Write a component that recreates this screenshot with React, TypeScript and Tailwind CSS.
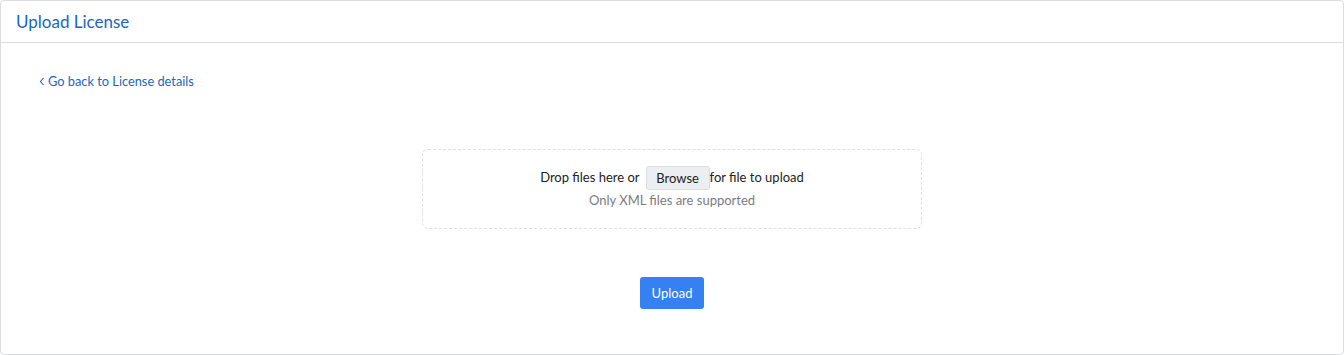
import React from 'react';

export default function App() {
  return (
    <div className="h-[355px] w-full bg-white" style={{ fontFamily: 'Lato, "Noto Sans", sans-serif' }}>
      <div className="h-[355px] rounded-[4px] border border-[#dcdde1] bg-white flex flex-col">
        <div className="h-[42px] border-b border-[#dcdde1] px-[15px] flex items-center">
          <h1 className="text-[17px] text-[#1b66c0] leading-none">Upload License</h1>
        </div>
        <div className="flex-1 px-[38px] pt-[32px]">
          <a href="#" className="flex items-center gap-[3px] text-[12.8px] text-[#1b66c0] leading-none">
            <svg width="6" height="9" viewBox="0 0 6 9" fill="none">
              <path d="M4.5 1 1.5 4.5 4.5 8" stroke="#1b66c0" strokeWidth="1.1" />
            </svg>
            Go back to License details
          </a>
          <div className="mt-[61px] flex justify-center">
            <div className="w-[500px] h-[80px] rounded-[6px] border border-dashed border-[#dde0e4] flex flex-col items-center justify-center pb-[5px]">
              <div className="flex items-center text-[13px] text-[#222] leading-none">
                <span>Drop files here or</span>
                <button className="ml-[6px] h-[24px] w-[64px] rounded-[3px] border border-[#dadde1] bg-[#eceef1] text-[13px] text-[#222] pt-[2px]">
                  Browse
                </button>
                <span>for file to upload</span>
              </div>
              <div className="mt-[4px] text-[13px] text-[#7a7d82] leading-none">Only XML files are supported</div>
            </div>
          </div>
          <div className="mt-[48px] flex justify-center">
            <button className="h-[32px] w-[64px] rounded-[3px] bg-[#3580f3] text-white text-[13px] pt-[2px]">Upload</button>
          </div>
        </div>
      </div>
    </div>
  );
}
